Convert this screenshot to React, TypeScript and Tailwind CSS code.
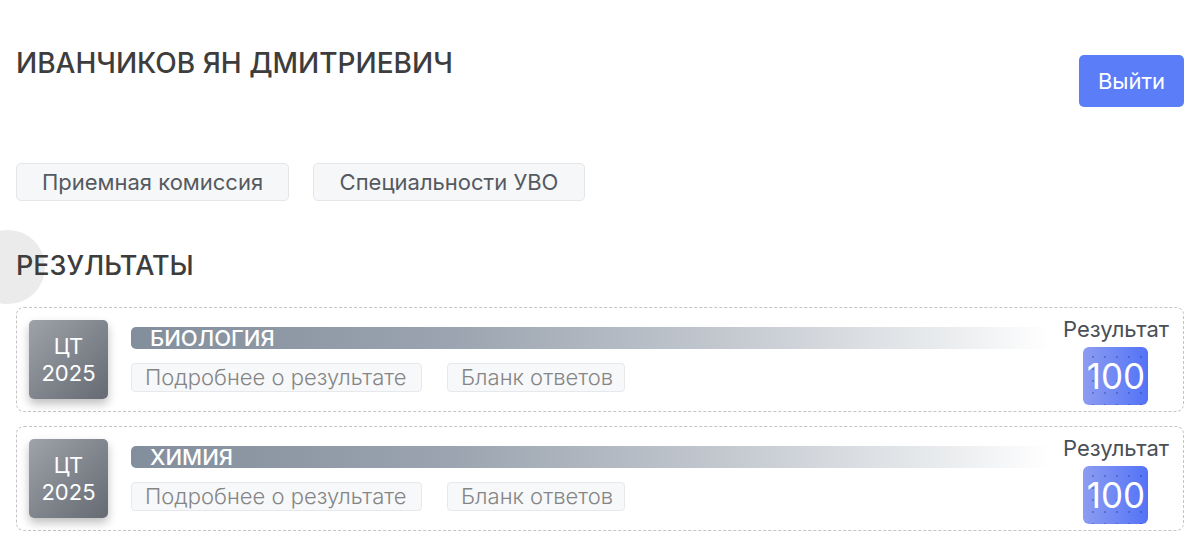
export default function App() {
  const subjects = ["БИОЛОГИЯ", "ХИМИЯ"];
  return (
    <div className="relative min-h-[552px] w-[1200px] overflow-hidden bg-white px-4 font-['Inter',sans-serif]">
      <div className="absolute left-[-29px] top-[230px] h-[74px] w-[74px] rounded-full bg-[#ebebeb]" />
      <div className="relative">
        <header className="flex items-start justify-between pt-[46px]">
          <h1 className="text-[28px] font-medium leading-[34px] text-[#3d3d3d]">ИВАНЧИКОВ ЯН ДМИТРИЕВИЧ</h1>
          <button className="mt-[9px] h-[52px] w-[105px] rounded-[5px] bg-[#5b7ef8] text-[22px] text-white">Выйти</button>
        </header>
        <nav className="mt-[56px] flex gap-6">
          <button className="h-[38px] w-[273px] rounded-[5px] border border-[#e4e6ea] bg-[#f6f7f9] text-[22px] text-[#555a60]">Приемная комиссия</button>
          <button className="h-[38px] w-[272px] rounded-[5px] border border-[#e4e6ea] bg-[#f6f7f9] text-[22px] text-[#555a60]">Специальности УВО</button>
        </nav>
        <h2 className="mt-[48px] text-[27px] font-medium leading-[34px] text-[#3d3d3d]">РЕЗУЛЬТАТЫ</h2>
        <div className="mt-6 flex flex-col gap-[14px]">
          {subjects.map((s) => (
            <div key={s} className="flex rounded-[8px] border border-dashed border-[#c4c4c4] p-3">
              <div className="flex h-[79px] w-[79px] shrink-0 flex-col items-center justify-center rounded-[5px] bg-linear-to-br from-[#9ea3aa] to-[#666b73] text-[22px] leading-[27px] text-white shadow-[0_5px_10px_rgba(0,0,0,0.25)]">
                <span>ЦТ</span>
                <span>2025</span>
              </div>
              <div className="ml-[23px] flex flex-1 flex-col pt-[7px]">
                <div className="h-[22px] rounded-l-[5px] bg-[linear-gradient(90deg,#838e9c_0%,#9ba4b0_35%,#c4c9d0_65%,#eceef0_90%,#ffffff_100%)] pl-[19px] text-[22px] font-medium leading-[23px] text-white">
                  {s}
                </div>
                <div className="mt-[14px] flex gap-[25px]">
                  <span className="h-[29px] w-[291px] rounded-[4px] border border-[#e6e8eb] bg-[#f7f8fa] pl-[13px] text-[22px] font-light leading-[27px] text-[#858585]">Подробнее о результате</span>
                  <span className="h-[29px] w-[178px] rounded-[4px] border border-[#e6e8eb] bg-[#f7f8fa] pl-[13px] text-[22px] font-light leading-[27px] text-[#858585]">Бланк ответов</span>
                </div>
              </div>
              <div className="-mb-[6px] -mt-1 ml-3 flex flex-col items-center pr-[2px]">
                <span className="text-[22px] leading-[26px] text-[#4a4f57]">Результат</span>
                <div className="relative mt-[5px] flex h-[58px] w-[65px] items-center justify-center overflow-hidden rounded-[6px] bg-linear-to-r from-[#8d9cf1] to-[#5372f7]">
                  <div className="absolute inset-0 bg-[radial-gradient(circle,rgba(40,50,120,0.35)_0.8px,transparent_1.2px)] bg-[length:12px_12px] bg-[position:4px_4px]" />
                  <span className="relative text-[35px] leading-[40px] text-white">100</span>
                </div>
              </div>
            </div>
          ))}
        </div>
      </div>
    </div>
  );
}
